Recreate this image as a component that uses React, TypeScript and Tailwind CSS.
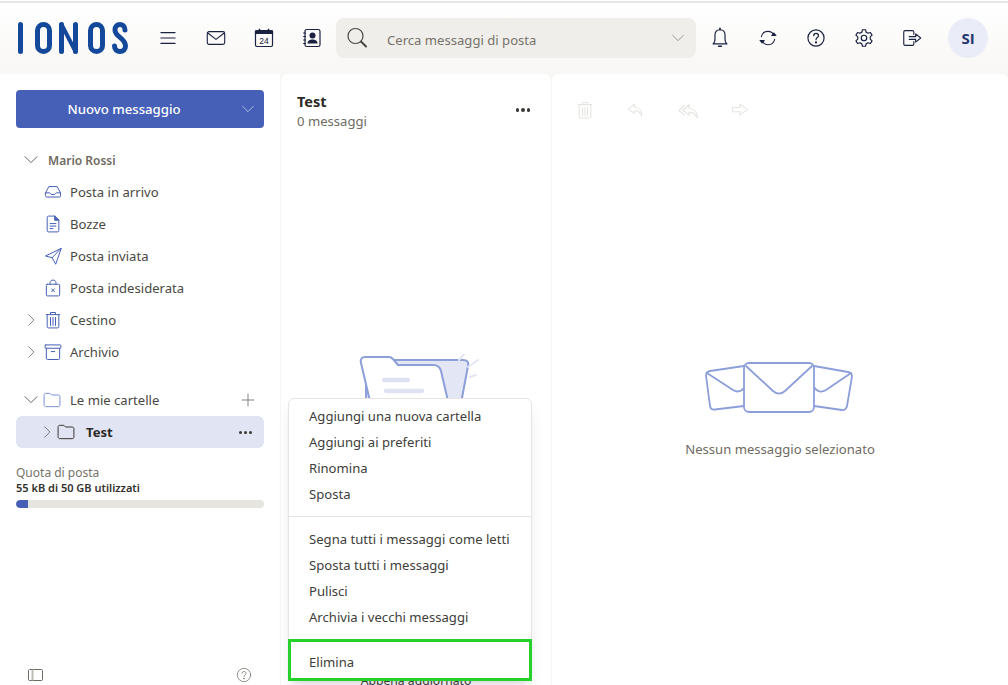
import React from "react";

const Ic = ({ size = 24, className = "", sw = 1.5, children }: { size?: number; className?: string; sw?: number; children: React.ReactNode }) => (
  <svg width={size} height={size} viewBox="0 0 24 24" fill="none" stroke="currentColor" strokeWidth={sw} strokeLinecap="round" strokeLinejoin="round" className={className}>
    {children}
  </svg>
);

const Logo = () => (
  <svg width="110" height="32" viewBox="0 0 110 32" fill="none" stroke="#14489b" strokeWidth="5" strokeLinecap="round" strokeLinejoin="round">
    <path d="M2.5 2.5V29.5" />
    <rect x="19.5" y="2.5" width="12" height="27" rx="6" />
    <path d="M43.5 29.5V2.5" />
    <path d="M57.5 2.5V29.5" />
    <path d="M43.5 2.5L57.5 29.5" strokeWidth="4" />
    <rect x="72.5" y="2.5" width="12" height="27" rx="6" />
    <path d="M107 8C107 4 104 2.5 102 2.5C99 2.5 97 4.5 97 8C97 15 107.5 16 107.5 24C107.5 27.5 105 29.5 102 29.5C99 29.5 96.5 27.5 96.5 24" />
  </svg>
);

const HeaderBtn = ({ children }: { children: React.ReactNode }) => (
  <div className="w-12 h-10 flex items-center justify-center text-[#1b2140]">{children}</div>
);

const Row = ({ icon, label, chev }: { icon: React.ReactNode; label: string; chev?: boolean }) => (
  <div className="h-8 flex items-center text-[13.1px] text-[#4a4843]">
    <div className="w-[22px] ml-[19px] flex items-center justify-start text-[#55524c]">
      {chev && (
        <Ic size={14} sw={1.2} className="ml-[5px]"><path d="M8 3l9 9-9 9" /></Ic>
      )}
    </div>
    <div className="w-[26px] -ml-[1px] flex items-center justify-center text-[#4660b8]">{icon}</div>
    <span className="ml-[4px] pt-px">{label}</span>
  </div>
);

const MenuItem = ({ label }: { label: string }) => (
  <div className="h-[26px] flex items-center pl-5 pt-[2px] text-[13.1px] text-[#403e3a]">{label}</div>
);

const Divider = () => <div className="h-px bg-[#e3e2de] my-[9px]" />;

const FolderArt = () => (
  <svg width="126" height="60" viewBox="0 0 126 60" fill="none" className="block">
    <path d="M10 6H107C111 6 113 8 112 12L103 60H92L10 60Z" fill="#e3e6f4" stroke="#8d9fdb" strokeWidth="2" />
    <path d="M5 9C4 5 6 3 9 3H33C35 3 36 4 37 5L42 11H77C82 11 84 13 85 17L95 60H17Z" fill="#fff" stroke="#8d9fdb" strokeWidth="2" strokeLinejoin="round" />
    <path d="M28 26H52M30 37H66" stroke="#dfe3f1" strokeWidth="4.5" strokeLinecap="round" />
    <path d="M103 6L108 0M112 13L122 6M114 23L120 21" stroke="#e3e6f4" strokeWidth="2" strokeLinecap="round" />
  </svg>
);

const EnvelopesArt = () => (
  <svg width="150" height="52" viewBox="0 0 150 52" fill="none" stroke="#8d9fdb" strokeWidth="1.8" strokeLinejoin="round" strokeLinecap="round" className="-translate-x-px">
    <path d="M40 4L6 9C3.5 9.5 2 11 2 13.5L6 44C6.5 46.5 8 48 11 47.5L40 44" />
    <path d="M3 11L29 28C33 30.5 37 29.5 40 26" />
    <path d="M110 4L144 10C147 10.5 148 12 148 14.5L143 44C142.5 47 140 48.5 138 48L110 44" />
    <path d="M147 11L122 28C117 31 113 29.5 110 25" />
    <rect x="40" y="1" width="70" height="49" rx="5" fill="#fff" />
    <path d="M42 4L69 29C73 32.5 77 32.5 81 29L108 4" />
  </svg>
);

export default function App() {
  return (
    <div className="h-[685px] w-full overflow-hidden flex flex-col bg-white relative" style={{ fontFamily: '"Noto Sans", sans-serif' }}>
      <div className="h-[2px] bg-[#e6e6e6] mt-px shrink-0" />
      <header className="h-[71px] shrink-0 flex items-start pt-[15px] bg-gradient-to-b from-white to-[#f8f7f5]">
        <div className="w-[144px] pl-[18px] pt-1 shrink-0"><Logo /></div>
        <HeaderBtn>
          <Ic size={20} sw={1.4}><path d="M3.5 5.5H20.5M3.5 12H20.5M3.5 18.5H20.5" /></Ic>
        </HeaderBtn>
        <HeaderBtn>
          <Ic size={22} sw={1.2}><rect x="2.5" y="5" width="19" height="14" rx="2" /><path d="M3 6.5L12 13.5L21 6.5" /></Ic>
        </HeaderBtn>
        <HeaderBtn>
          <svg width="20" height="20" viewBox="0 0 20 20" fill="none" stroke="currentColor" strokeWidth="1.2">
            <rect x="1.5" y="2.5" width="17" height="16" rx="1.5" />
            <path d="M1.5 3H18.5V5.5H1.5Z" fill="currentColor" />
            <path d="M5.5 .8V3M14.5 .8V3" strokeWidth="1.5" />
            <text x="10" y="15.5" textAnchor="middle" fontSize="8.5" fill="currentColor" stroke="none" fontFamily="Liberation Sans">24</text>
          </svg>
        </HeaderBtn>
        <HeaderBtn>
          <svg width="20" height="20" viewBox="0 0 20 20" fill="none" stroke="currentColor" strokeWidth="1.2">
            <rect x="3" y="1.5" width="15" height="17" rx="1.8" />
            <circle cx="10.5" cy="7.5" r="3" fill="currentColor" stroke="none" />
            <path d="M5.5 15.5C5.5 12.5 8 11.5 10.5 11.5C13 11.5 15.5 12.5 15.5 15.5Z" fill="currentColor" stroke="none" />
            <path d="M1.2 5H4M1.2 8.5H4M1.2 12H4M1.2 15.5H4" strokeWidth="1.1" />
          </svg>
        </HeaderBtn>
        <div className="w-[360px] h-10 rounded-lg bg-[#efeeea] flex items-center shrink-0 relative">
          <Ic size={24} sw={1.2} className="ml-[9px] text-[#4a4740]"><circle cx="10.5" cy="10" r="7.5" /><path d="M16 15.5L21 20.5" strokeWidth="2" /></Ic>
          <span className="ml-[18px] pt-[5px] text-[13.1px] text-[#77736b]">Cerca messaggi di posta</span>
          <Ic size={16} sw={1.1} className="absolute right-[10px] top-3 text-[#7d7a72]"><path d="M4 8l8 8 8-8" /></Ic>
        </div>
        <HeaderBtn>
          <Ic size={22} sw={1.3}><path d="M12 3C8 3 6.5 6 6.5 9V14C6.5 16 5.5 17.5 4.5 18.5H19.5C18.5 17.5 17.5 16 17.5 14V9C17.5 6 16 3 12 3Z" /><path d="M12 1.5V3M10.5 21H13.5" strokeWidth="1.8" /></Ic>
        </HeaderBtn>
        <HeaderBtn>
          <Ic size={20} sw={1.3}><path d="M4 10.5C4.8 6.5 8 4 12 4C15 4 17.5 5.5 19 8" /><path d="M20 13.5C19.2 17.5 16 20 12 20C9 20 6.5 18.5 5 16" /><path d="M16.5 9H21.5L19 6Z" fill="currentColor" /><path d="M2.5 15H7.5L5 18Z" fill="currentColor" /></Ic>
        </HeaderBtn>
        <HeaderBtn>
          <Ic size={22} sw={1.3}><circle cx="12" cy="12" r="8.8" /><path d="M9.5 9.5C9.5 8 10.7 7 12 7C13.5 7 14.7 8 14.7 9.5C14.7 11.5 12 11.5 12 13.8" /><circle cx="12" cy="16.8" r=".6" fill="currentColor" /></Ic>
        </HeaderBtn>
        <HeaderBtn>
          <Ic size={22} sw={1.3}><circle cx="12" cy="12" r="3" /><path d="M10.3 3H13.7L14.3 5.6L16.5 6.8L19 6L20.8 8.9L18.8 10.8V13.2L20.8 15.1L19 18L16.5 17.2L14.3 18.4L13.7 21H10.3L9.7 18.4L7.5 17.2L5 18L3.2 15.1L5.2 13.2V10.8L3.2 8.9L5 6L7.5 6.8L9.7 5.6Z" /></Ic>
        </HeaderBtn>
        <HeaderBtn>
          <Ic size={22} sw={1.2}><path d="M14 8V5.5C14 4.5 13.5 4 12.5 4H4.5C3.5 4 3 4.5 3 5.5V18.5C3 19.5 3.5 20 4.5 20H12.5C13.5 20 14 19.5 14 18.5V16" /><path d="M9 10.5H16V7.5L21.5 12L16 16.5V13.5H9" /></Ic>
        </HeaderBtn>
        <div className="ml-3 w-10 h-10 rounded-full bg-[#eaedf7] flex items-center justify-center text-[15px] font-bold text-[#26376f]" style={{ fontFamily: '"Open Sans", sans-serif' }}>SI</div>
      </header>

      <main className="flex-1 min-h-0 flex bg-[#f7f6f3]">
        <aside className="w-[280px] shrink-0 bg-white flex flex-col px-0 pt-4 relative">
          <div className="mx-4 h-[38px] rounded bg-[#4660b8] flex items-center text-white text-[13.2px] font-medium">
            <span className="w-[216px] text-center pt-[2px]">Nuovo messaggio</span>
            <span className="w-8 flex justify-center text-[#d5dbf0]"><Ic size={16} sw={1.1}><path d="M4 8l8 8 8-8" /></Ic></span>
          </div>
          <div className="mt-4">
            <div className="h-8 flex items-center text-[12px] font-semibold text-[#6f6a60]">
              <Ic size={16} sw={1.2} className="ml-[23px] text-[#3f3d38]"><path d="M3 7l9 9 9-9" /></Ic>
              <span className="ml-[9px] pt-[2px]">Mario Rossi</span>
            </div>
            <Row label="Posta in arrivo" icon={<Ic size={20} sw={1.2}><path d="M3 13L7 5.5H17L21 13V16.5C21 17.5 20.5 18 19.5 18H4.5C3.5 18 3 17.5 3 16.5Z" /><path d="M3 13H8L10 15H14L16 13H21" /></Ic>} />
            <Row label="Bozze" icon={<Ic size={20} sw={1.2}><path d="M14 2.5H7C5.5 2.5 5 3 5 4.5V19.5C5 21 5.5 21.5 7 21.5H17C18.5 21.5 19 21 19 19.5V7.5Z" /><path d="M14 2.5V7.5H19" fill="currentColor" /><path d="M8.5 11.5H15.5M8.5 14.5H15.5M8.5 17.5H12" /></Ic>} />
            <Row label="Posta inviata" icon={<Ic size={20} sw={1.2}><path d="M21.5 3L3 12L11 14L15 21.5Z" /><path d="M21.5 3L11 14" /></Ic>} />
            <Row label="Posta indesiderata" icon={<Ic size={20} sw={1.2}><rect x="4" y="7.5" width="16" height="14" rx="1.2" /><path d="M8.5 7.5V5.5C8.5 3.5 10 2.5 12 2.5C14 2.5 15.5 3.5 15.5 5.5V7.5" /><path d="M10.3 13L13.7 16.5M13.7 13L10.3 16.5" /></Ic>} />
            <Row chev label="Cestino" icon={<Ic size={20} sw={1.2}><path d="M4 5.5H20M9 4.5V3H15V4.5" /><path d="M5 6V20C5 21 5.5 21.5 6.5 21.5H17.5C18.5 21.5 19 21 19 20V6" /><path d="M9 9V18.5M12 9V18.5M15 9V18.5" /></Ic>} />
            <Row chev label="Archivio" icon={<Ic size={20} sw={1.2}><rect x="2.5" y="3.5" width="19" height="4" rx=".8" /><path d="M4 7.5V19.5C4 20.5 4.5 21 5.5 21H18.5C19.5 21 20 20.5 20 19.5V7.5" /><path d="M10 11.5H14" /></Ic>} />
          </div>
          <div className="mt-4 h-8 flex items-center text-[13.1px] text-[#4a4843] relative">
            <Ic size={16} sw={1.2} className="ml-[23px] text-[#3f3d38]"><path d="M3 7l9 9 9-9" /></Ic>
            <span className="text-[#7f92d6] ml-[3px]"><Ic size={20} sw={1.2}><path d="M2.5 6C2.5 4.5 3.5 4 4.5 4H9.5L11.5 6H19.5C21 6 21.5 7 21.5 8V18C21.5 19 21 20 19.5 20H4.5C3.5 20 2.5 19 2.5 18Z" /></Ic></span>
            <span className="ml-[8px] pt-px">Le mie cartelle</span>
            <span className="absolute left-[240px] text-[#77736b]"><Ic size={16} sw={1.3}><path d="M12 3V21M3 12H21" /></Ic></span>
          </div>
          <div className="mx-4 h-8 rounded-md bg-[#e1e4f3] flex items-center text-[13.1px] font-bold text-[#2c2a27] relative">
            <Ic size={14} sw={1.2} className="ml-[24px] text-[#4a4740]"><path d="M8 3l9 9-9 9" /></Ic>
            <span className="ml-[2px] text-[#3a3834]"><Ic size={20} sw={1.2}><path d="M2.5 6C2.5 4.5 3.5 4 4.5 4H9.5L11.5 6H19.5C21 6 21.5 7 21.5 8V18C21.5 19 21 20 19.5 20H4.5C3.5 20 2.5 19 2.5 18Z" /></Ic></span>
            <span className="ml-[10px] pt-[2px]">Test</span>
            <span className="absolute right-[12px] flex gap-[2px]">
              <i className="w-[3px] h-[3px] rounded-full bg-[#3a3834]" /><i className="w-[3px] h-[3px] rounded-full bg-[#3a3834]" /><i className="w-[3px] h-[3px] rounded-full bg-[#3a3834]" />
            </span>
          </div>
          <div className="mx-4 mt-[17px] text-[12px] leading-4 text-[#77736b]">Quota di posta</div>
          <div className="mx-4 -mt-px text-[11px] leading-4 font-semibold text-[#33312d]">55 kB di 50 GB utilizzati</div>
          <div className="mx-4 mt-1 h-2 rounded-full bg-[#e6e5e0] overflow-hidden"><div className="h-full w-3 bg-[#4660b8] rounded-l-full" /></div>
          <div className="mt-auto h-[18px] flex items-start justify-between pl-[28px] pr-[28px] text-[#6f6b63]">
            <svg width="16" height="14" viewBox="0 0 16 14" fill="none" stroke="currentColor" strokeWidth="1" className="mt-px"><rect x=".5" y="1.5" width="14" height="11" rx="1" /><path d="M4.5 1.5V12.5" strokeWidth="2" stroke="#bdbab3" /></svg>
            <Ic size={16} sw={1.1}><circle cx="12" cy="12" r="10" /><path d="M9 9.5C9 7.8 10.3 6.8 12 6.8C13.7 6.800 15 7.8 15 9.5C15 11.8 12 11.8 12 14.3" /><circle cx="12" cy="17.5" r=".5" fill="currentColor" /></Ic>
          </div>
        </aside>

        <section className="w-[270px] shrink-0 ml-px mr-px rounded-t-md bg-white flex flex-col relative">
          <div className="flex items-start justify-between pl-4 pr-[21px] pt-[17px]">
            <div>
              <div className="text-[14.5px] leading-5 font-bold text-[#2c2a27]">Test</div>
              <div className="text-[13.1px] leading-5 text-[#6f6b63]">0 messaggi</div>
            </div>
            <span className="flex gap-[2px] mt-[17px]">
              <i className="w-[3.5px] h-[3.5px] rounded-full bg-[#3a3834]" /><i className="w-[3.5px] h-[3.5px] rounded-full bg-[#3a3834]" /><i className="w-[3.5px] h-[3.5px] rounded-full bg-[#3a3834]" />
            </span>
          </div>
          <div className="mt-[223px] pl-[75px]"><FolderArt /></div>
          <div className="mt-auto h-[11px] text-center text-[12.2px] leading-[13px] text-[#45433e] overflow-hidden">Appena aggiornato</div>

          <div className="absolute left-[7px] top-[324px] w-[244px] h-[283px] bg-white rounded-md border border-[#e6e5e1] shadow-lg py-[4px] flex flex-col">
            <MenuItem label="Aggiungi una nuova cartella" />
            <MenuItem label="Aggiungi ai preferiti" />
            <MenuItem label="Rinomina" />
            <MenuItem label="Sposta" />
            <Divider />
            <MenuItem label="Segna tutti i messaggi come letti" />
            <MenuItem label="Sposta tutti i messaggi" />
            <MenuItem label="Pulisci" />
            <MenuItem label="Archivia i vecchi messaggi" />
            <div className="absolute -left-[1px] -right-[1px] top-[240px] h-[42px] border-[3px] border-[#27d12b] bg-white flex items-center pl-[18px] pt-[5px] text-[13.1px] text-[#403e3a]">Elimina</div>
          </div>
        </section>

        <section className="flex-1 rounded-t-md bg-white flex flex-col">
          <div className="h-[72px] flex items-start pt-[26px] text-[#e6e5e1]">
            <span className="ml-[23px]"><Ic size={20} sw={1.3}><path d="M4 5.5H20M9 4.5V3H15V4.5" /><path d="M5 6V20C5 21 5.5 21.5 6.5 21.5H17.5C18.5 21.5 19 21 19 20V6" /><path d="M9 9V18.5M12 9V18.5M15 9V18.5" /></Ic></span>
            <span className="ml-[31px]"><Ic size={20} sw={1.3}><path d="M10 5L3 11L10 16V13C14 12.5 17 14.5 19 19C19.5 13 16 9 10 8.5Z" /></Ic></span>
            <span className="ml-[32px]"><Ic size={22} sw={1.3}><path d="M7 6L1 11.5L7 16.5" /><path d="M12 5L5.5 11.5L12 16.5V13.5C16 13 19 15 21 19.5C21.5 13.5 18 9.5 12 9Z" /></Ic></span>
            <span className="ml-[30px]"><Ic size={20} sw={1.3}><path d="M3 9H12V5L21 11.5L12 18V14H3Z" /></Ic></span>
          </div>
          <div className="flex-1 flex flex-col items-center pt-[216px]">
            <EnvelopesArt />
            <div className="mt-[25px] text-[13.1px] leading-5 text-[#6f6b63]">Nessun messaggio selezionato</div>
          </div>
        </section>
      </main>
    </div>
  );
}
